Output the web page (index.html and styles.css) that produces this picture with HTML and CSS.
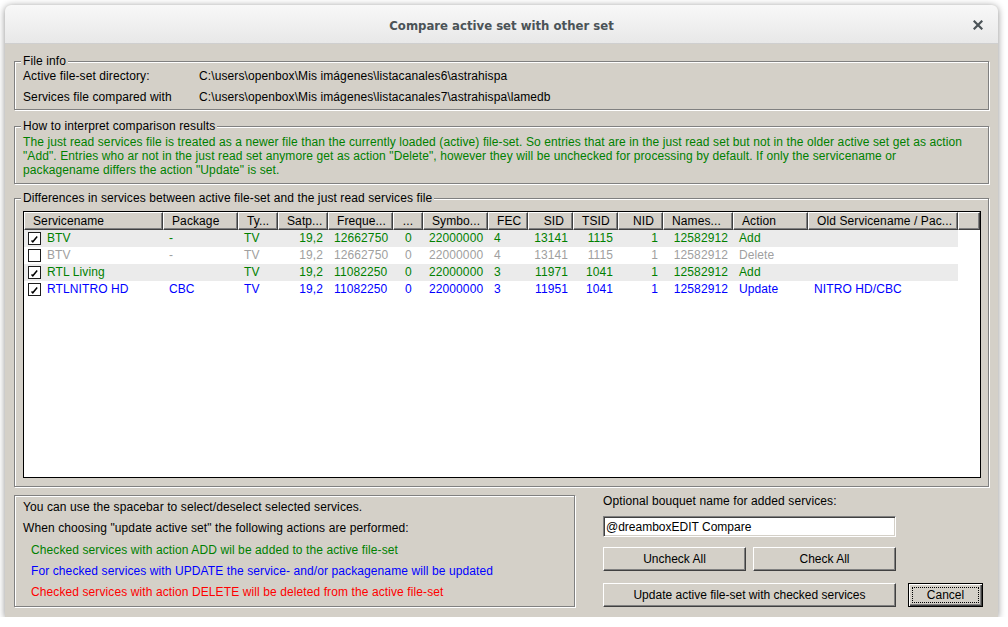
FILE: index.html
```html
<!DOCTYPE html>
<html lang="en">

<head>
    <meta charset="UTF-8">
    <meta name="viewport" content="width=device-width, initial-scale=1.0">
    <title>Compare active set with other set</title>
    <link rel="stylesheet" href="styles.css">
</head>

<body>
    <div class="window">
        <div class="titlebar">
            <span></span>
            <span class="title">Compare active set with other set</span>
            <span class="close">
                <svg width="10" height="10" viewBox="0 0 10 10">
                    <path d="M1.5 1.5 L8.5 8.5 M8.5 1.5 L1.5 8.5" stroke="#4b5357" stroke-width="2.2" stroke-linecap="square" />
                </svg>
            </span>
        </div>

        <div class="content">
            <fieldset class="group file-info">
                <legend>File info</legend>
                <div class="info-row">
                    <span class="info-label">Active file-set directory:</span>
                    <span>C:\users\openbox\Mis imágenes\listacanales6\astrahispa</span>
                </div>
                <div class="info-row">
                    <span class="info-label">Services file compared with</span>
                    <span>C:\users\openbox\Mis imágenes\listacanales7\astrahispa\lamedb</span>
                </div>
            </fieldset>

            <fieldset class="group howto">
                <legend>How to interpret comparison results</legend>
                <p class="green">The just read services file is treated as a newer file than the currently loaded (active) file-set. So entries that are in the just read set but not in the older active set get as action<br>"Add". Entries who ar not in the just read set anymore get as action "Delete", however they will be unchecked for processing by default. If only the servicename or<br>packagename differs the action "Update" is set.</p>
            </fieldset>

            <fieldset class="group differences">
                <legend>Differences in services between active file-set and the just read services file</legend>
                <div class="listview">
                    <div class="lv-row lv-head">
                        <span>Servicename</span>
                        <span>Package</span>
                        <span>Ty...</span>
                        <span class="r">Satp...</span>
                        <span>Freque...</span>
                        <span class="c">...</span>
                        <span>Symbo...</span>
                        <span>FEC</span>
                        <span class="r">SID</span>
                        <span class="r">TSID</span>
                        <span class="r">NID</span>
                        <span>Names...</span>
                        <span>Action</span>
                        <span>Old Servicename / Pac...</span>
                        <span class="filler"></span>
                    </div>

                    <div class="lv-row stripe green">
                        <span class="name"><i class="check on"></i>BTV</span>
                        <span>-</span>
                        <span>TV</span>
                        <span class="r">19,2</span>
                        <span>12662750</span>
                        <span class="c">0</span>
                        <span>22000000</span>
                        <span>4</span>
                        <span class="r">13141</span>
                        <span class="r">1115</span>
                        <span class="r">1</span>
                        <span class="r">12582912</span>
                        <span>Add</span>
                        <span></span>
                    </div>
                    <div class="lv-row gray">
                        <span class="name"><i class="check"></i>BTV</span>
                        <span>-</span>
                        <span>TV</span>
                        <span class="r">19,2</span>
                        <span>12662750</span>
                        <span class="c">0</span>
                        <span>22000000</span>
                        <span>4</span>
                        <span class="r">13141</span>
                        <span class="r">1115</span>
                        <span class="r">1</span>
                        <span class="r">12582912</span>
                        <span>Delete</span>
                        <span></span>
                    </div>
                    <div class="lv-row stripe green">
                        <span class="name"><i class="check on"></i>RTL Living</span>
                        <span></span>
                        <span>TV</span>
                        <span class="r">19,2</span>
                        <span>11082250</span>
                        <span class="c">0</span>
                        <span>22000000</span>
                        <span>3</span>
                        <span class="r">11971</span>
                        <span class="r">1041</span>
                        <span class="r">1</span>
                        <span class="r">12582912</span>
                        <span>Add</span>
                        <span></span>
                    </div>
                    <div class="lv-row blue">
                        <span class="name"><i class="check on"></i>RTLNITRO HD</span>
                        <span>CBC</span>
                        <span>TV</span>
                        <span class="r">19,2</span>
                        <span>11082250</span>
                        <span class="c">0</span>
                        <span>22000000</span>
                        <span>3</span>
                        <span class="r">11951</span>
                        <span class="r">1041</span>
                        <span class="r">1</span>
                        <span class="r">12582912</span>
                        <span>Update</span>
                        <span>NITRO HD/CBC</span>
                    </div>
                </div>
            </fieldset>

            <div class="bottom">
                <div class="notes">
                    <p>You can use the spacebar to select/deselect selected services.</p>
                    <p>When choosing "update active set" the following actions are performed:</p>
                    <p class="indent green">Checked services with action ADD wil be added to the active file-set</p>
                    <p class="indent blue">For checked services with UPDATE the service- and/or packagename will be updated</p>
                    <p class="indent red">Checked services with action DELETE will be deleted from the active file-set</p>
                </div>

                <div class="actions">
                    <label class="bouquet-label" for="bouquet">Optional bouquet name for added services:</label>
                    <input id="bouquet" class="textbox" type="text" value="@dreamboxEDIT Compare">
                    <div class="btn-row first">
                        <button class="btn half">Uncheck All</button>
                        <button class="btn half">Check All</button>
                    </div>
                    <div class="btn-row second">
                        <button class="btn wide">Update active file-set with checked services</button>
                        <button class="btn default"><span class="focus">Cancel</span></button>
                    </div>
                </div>
            </div>
        </div>
    </div>
</body>

</html>
```

FILE: styles.css
```css
* {
    box-sizing: border-box;
    margin: 0;
    padding: 0;
}

body {
    background: #fff;
    font-family: "Liberation Sans", Arial, sans-serif;
    font-size: 12px;
    letter-spacing: 0.1px;
    color: #000;
}

.window {
    margin: 5px 0 0 5px;
    width: 993px;
    height: 612px;
    background: #d4d0c8;
    border-radius: 6px 6px 0 0;
    box-shadow: 0 1px 7px rgba(0, 0, 0, 0.45);
    overflow: hidden;
}

.titlebar {
    height: 39px;
    display: grid;
    grid-template-columns: 1fr auto 1fr;
    align-items: center;
    padding: 2px 15px 0;
    background: linear-gradient(#f8f8f8, #e8e8e8);
    border-bottom: 1px solid #cfcfcf;
}

.title {
    font-family: "DejaVu Sans Condensed", "DejaVu Sans", sans-serif;
    font-weight: bold;
    font-size: 13px;
    letter-spacing: 0;
    color: #4b5357;
}

.close {
    justify-self: end;
    display: flex;
}

.content {
    padding: 10px 9px 0;
}

/* group boxes */
.group {
    border: 1px solid #808080;
    box-shadow: inset 1px 1px #fff, 1px 1px #fff;
    padding: 0 8px;
}

.group legend {
    line-height: 14px;
    padding: 0 2px;
    margin-left: -2px;
    background: #d4d0c8;
}

.file-info {
    padding-top: 0;
    padding-bottom: 1px;
}

.info-row {
    display: flex;
    line-height: 21px;
}

.info-row:first-of-type {
    margin-top: -2px;
}

.info-label {
    width: 176px;
}

.howto {
    margin-top: 9px;
    padding-top: 2px;
    padding-bottom: 6px;
}

.howto p {
    line-height: 14px;
    white-space: nowrap;
}

.green {
    color: #008000;
}

.blue {
    color: #0000ff;
}

.red {
    color: #ff0000;
}

.gray {
    color: #a0a0a0;
}

.differences {
    margin-top: 7px;
    padding: 6px 7px 8px 8px;
}

/* list view */
.listview {
    height: 267px;
    background: #fff;
    border: 1px solid #000;
    overflow: hidden;
}

.lv-row {
    display: grid;
    grid-template-columns: 139px 75px 40px 50px 65px 30px 65px 40px 45px 45px 45px 70px 75px 150px;
    width: 934px;
    height: 17px;
    line-height: 17px;
}

.lv-row span {
    padding: 0 5px 0 6px;
    white-space: nowrap;
    overflow: hidden;
}

.lv-row .r {
    text-align: right;
}

.lv-row .c {
    text-align: center;
}

.lv-head {
    grid-template-columns: 139px 75px 40px 50px 65px 30px 65px 40px 45px 45px 45px 70px 75px 150px 1fr;
    width: auto;
    height: 18px;
    background: #d4d0c8;
    color: #000;
}

.lv-head span {
    padding: 0 8px 0 8px;
    line-height: 16px;
    border-top: 1px solid #fff;
    border-left: 1px solid #fff;
    border-right: 1px solid #404040;
    border-bottom: 1px solid #404040;
    box-shadow: inset -1px -1px #808080;
}

.lv-head .c {
    padding: 0 2px;
}

.stripe {
    background: #ebebeb;
}

.lv-row .name {
    display: flex;
    align-items: center;
    padding-left: 4px;
}

.check {
    flex: none;
    width: 13px;
    height: 13px;
    margin-right: 6px;
    border: 1px solid #1c1c1c;
    background: #fff;
}

.check.on {
    background: #fff url("data:image/svg+xml,%3Csvg xmlns='http://www.w3.org/2000/svg' width='11' height='11'%3E%3Cpath d='M2.5 7.5 L3.8 8.8 L8.2 3.6' fill='none' stroke='%23000' stroke-width='1.5'/%3E%3C/svg%3E") no-repeat center;
}

/* bottom part */
.bottom {
    display: flex;
    margin-top: 8px;
}

.notes {
    width: 561px;
    height: 112px;
    border: 1px solid #808080;
    box-shadow: inset 1px 1px #fff, 1px 1px #fff;
    padding: 1px 8px 0;
}

.notes p {
    line-height: 21.25px;
    white-space: nowrap;
}

.notes .indent {
    padding-left: 8px;
}

.actions {
    margin-left: 28px;
    display: flex;
    flex-direction: column;
}

.bouquet-label {
    line-height: 13px;
}

.textbox {
    margin-top: 8px;
    width: 293px;
    height: 21px;
    font: inherit;
    padding: 0 2px;
    background: #fff;
    border: 1px solid;
    border-color: #808080 #fff #fff #808080;
    box-shadow: inset 1px 1px #404040, inset -1px -1px #d4d0c8;
    outline: none;
}

.btn-row {
    display: flex;
}

.btn-row.first {
    margin-top: 10px;
    gap: 7px;
}

.btn-row.second {
    margin-top: 12px;
    gap: 12px;
}

.btn {
    height: 24px;
    font: inherit;
    color: #000;
    background: #d4d0c8;
    border: 1px solid;
    border-color: #fff #404040 #404040 #fff;
    box-shadow: inset -1px -1px #808080;
}

.btn.half {
    width: 143px;
}

.btn.wide {
    width: 293px;
}

.btn.default {
    width: 75px;
    border: 1px solid #000;
    box-shadow: inset 1px 1px #fff, inset -1px -1px #404040, inset -2px -2px #808080;
    padding: 3px;
}

.focus {
    display: block;
    height: 100%;
    line-height: 14px;
    border: 1px dotted #000;
}
```
